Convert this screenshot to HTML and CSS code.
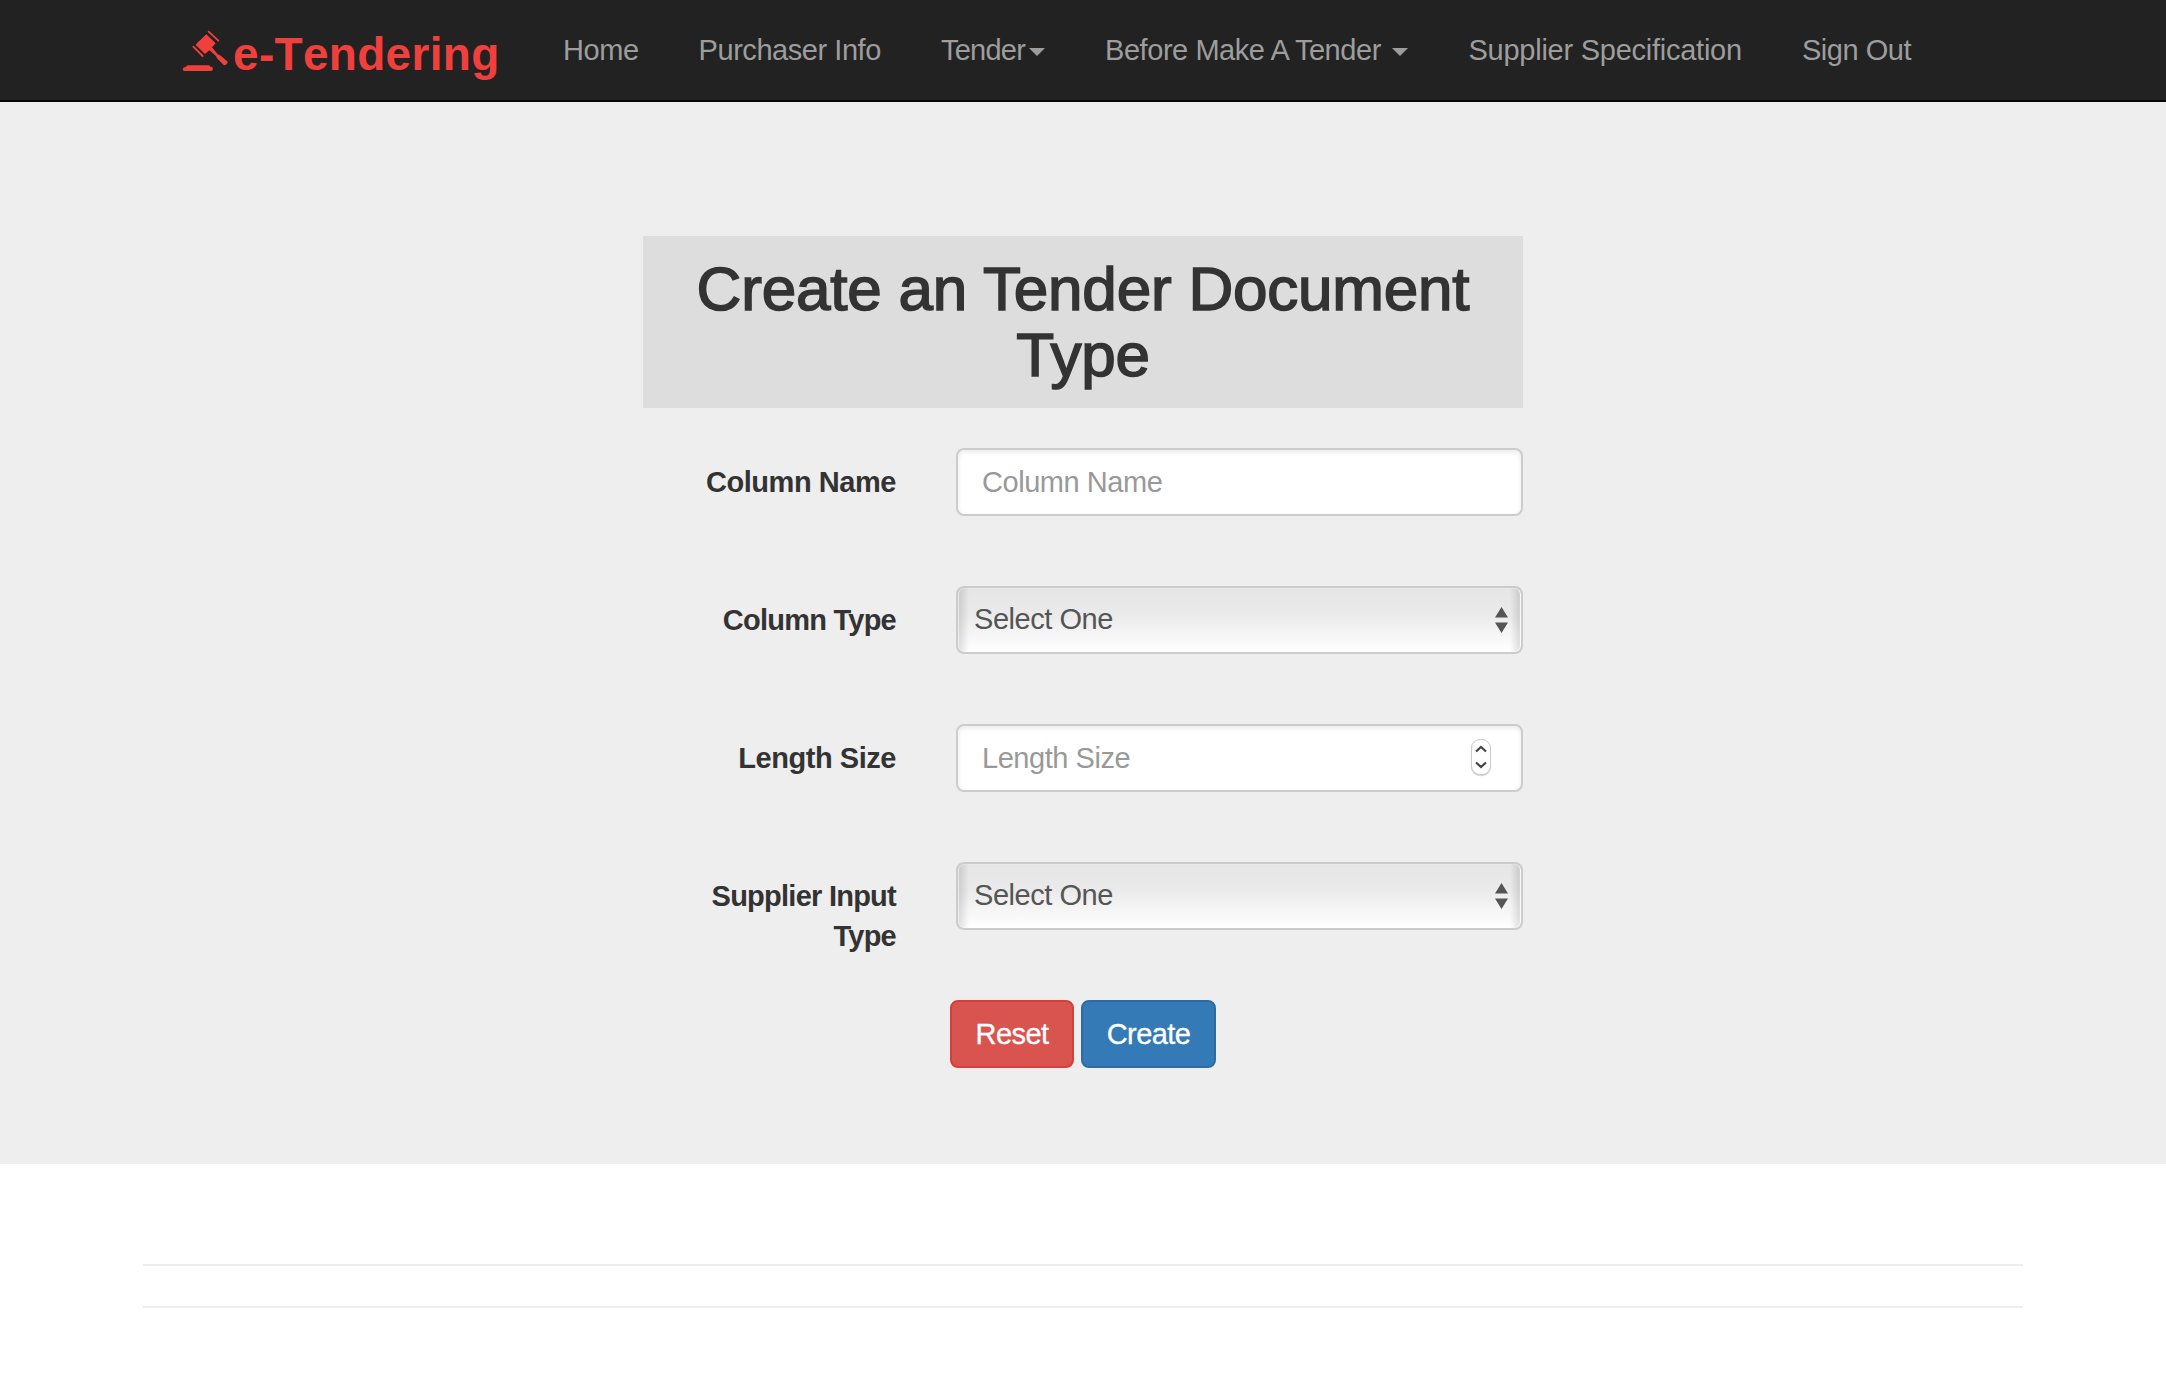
FILE: index.html
```html
<!DOCTYPE html>
<html lang="en">
<head>
<meta charset="utf-8">
<title>e-Tendering</title>
<link rel="stylesheet" href="styles.css">
</head>
<body>
<nav class="navbar">
  <a class="brand">
    <svg class="brand-icon" viewBox="66 90 138 126" fill="#ef403d">
      <path d="M83 196h63q4 0 5 4h3q5 1 5 6-1 7-6 7H74q-6 0-6-6 1-5 7-6h3q1-5 5-5z"/>
      <path d="M139 103l28 27-11 12 17 21q6 1 11 6l19 16-1 5-5 5-5 1-19-19q-4-5-5-9l-20-17-13 11-28-27q5-7 10-11z"/>
      <path d="M146 95l29 27M100 140l28 28" stroke="#ef403d" stroke-width="5.500" stroke-linecap="round"/>
    </svg>
    <span class="brand-text">e-Tendering</span>
  </a>
  <ul class="menu">
    <li>Home</li>
    <li>Purchaser Info</li>
    <li class="tight">Tender<i class="caret"></i></li>
    <li>Before Make A Tender <i class="caret"></i></li>
    <li class="wide">Supplier Specification</li>
    <li>Sign Out</li>
  </ul>
</nav>
<main class="jumbotron">
  <form class="tender-form">
    <h2 class="title">Create an Tender Document Type</h2>
    <div class="row">
      <label class="label">Column Name</label>
      <div class="field"><input class="control" type="text" placeholder="Column Name"></div>
    </div>
    <div class="row">
      <label class="label tight">Column Type</label>
      <div class="field">
        <select class="control select"><option>Select One</option></select>
        <svg class="arrows" viewBox="0 0 13 26" fill="#555"><path d="M6.500 0L13 10.500H0zM0 15.500h13L6.500 26z"/></svg>
      </div>
    </div>
    <div class="row">
      <label class="label">Length Size</label>
      <div class="field">
        <input class="control" type="text" placeholder="Length Size">
        <span class="spinner">
          <svg viewBox="0 0 12 24" fill="none" stroke="#444" stroke-width="2.200"><path d="M1 6.500l5-4.500 5 4.500M1 17.500l5 4.500 5-4.500"/></svg>
        </span>
      </div>
    </div>
    <div class="row">
      <label class="label tight">Supplier Input Type</label>
      <div class="field">
        <select class="control select"><option>Select One</option></select>
        <svg class="arrows" viewBox="0 0 13 26" fill="#555"><path d="M6.500 0L13 10.500H0zM0 15.500h13L6.500 26z"/></svg>
      </div>
    </div>
    <div class="actions">
      <button class="btn btn-danger" type="button">Reset</button>
      <button class="btn btn-primary" type="button">Create</button>
    </div>
  </form>
</main>
<footer class="footer">
  <hr class="rule">
  <hr class="rule">
</footer>
</body>
</html>
```
FILE: styles.css
```css
* { box-sizing: border-box; }
body {
  margin: 0;
  background: #fff;
  color: #333;
  font: 29px/40px "Liberation Sans", Arial, sans-serif;
  letter-spacing: -0.45px;
}
.navbar {
  display: flex;
  height: 102px;
  padding-left: 182px;
  background: #222;
  border-bottom: 2px solid #080808;
}
.brand {
  display: flex;
  width: 381px;
  padding-top: 30px;
  color: #ef403d;
}
.brand-icon { width: 46px; height: 42px; }
.brand-text {
  margin: -1px 0 0 5px;
  font-size: 46px;
  font-weight: 700;
  font-kerning: none;
  line-height: 50px;
  letter-spacing: .3px;
}
.menu {
  display: flex;
  gap: 60px;
  margin: 0;
  padding: 30px 0 0;
  list-style: none;
  color: #9d9d9d;
  white-space: pre;
}
.tight { letter-spacing: -0.75px; }
.wide { letter-spacing: -0.25px; }
.caret {
  display: inline-block;
  margin-left: 4px;
  vertical-align: middle;
  border-top: 8px solid;
  border-left: 8px solid transparent;
  border-right: 8px solid transparent;
}
.jumbotron {
  height: 1062px;
  padding-top: 134px;
  background: #eee;
}
.tender-form { width: 880px; margin: 0 auto; }
.title {
  height: 172px;
  margin: 0 0 40px;
  padding: 20px 40px;
  background: #ddd;
  font-size: 62px;
  font-weight: 400;
  line-height: 66px;
  letter-spacing: -0.2px;
  text-align: center;
  -webkit-text-stroke: 1.6px #333;
}
.row {
  display: grid;
  grid-template-columns: 253px 567px;
  column-gap: 60px;
  height: 138px;
}
.label {
  padding: 14px 0 0 40px;
  font-weight: 700;
  text-align: right;
}
.field { position: relative; height: 68px; }
.control {
  display: block;
  width: 100%;
  height: 68px;
  padding: 12px 24px;
  border: 2px solid #ccc;
  border-radius: 8px;
  background: #fff;
  box-shadow: inset 0 2px 5px rgba(0, 0, 0, .09);
  color: #555;
  font: inherit;
  letter-spacing: inherit;
  outline: 0;
}
.control::placeholder { color: #999; opacity: 1; }
.select {
  appearance: none;
  padding: 11px 16px 13px;
  background:
    linear-gradient(90deg, #0002, #0000) left / 11px 100% no-repeat,
    linear-gradient(270deg, #0002, #0000) right / 11px 100% no-repeat,
    linear-gradient(#e6e6e6, #eaeaea 40%, #fff);
  box-shadow: inset -1px 0 1px #fff, inset 1px 0 1px #fff9;
}
.arrows {
  position: absolute;
  right: 15px;
  top: 21px;
  width: 13px;
  height: 26px;
}
.spinner {
  position: absolute;
  right: 32px;
  top: 15px;
  display: grid;
  place-items: center;
  width: 20px;
  height: 36px;
  border: 1px solid #ccc;
  border-radius: 9px;
  background: #fff;
  box-shadow: 0 1px 1px #0003;
}
.spinner svg { width: 12px; height: 24px; }
.actions {
  display: flex;
  gap: 7px;
  padding-left: 307px;
}
.btn {
  height: 68px;
  padding: 0;
  border: 2px solid;
  border-radius: 8px;
  color: #fff;
  font: inherit;
  letter-spacing: -0.6px;
  -webkit-text-stroke: .3px #fff;
}
.btn-danger { width: 124px; background: #d9534f; border-color: #d43f3a; }
.btn-primary { width: 135px; background: #337ab7; border-color: #2e6da4; }
.footer { width: 1880px; margin: 100px auto 0; }
.rule {
  height: 2px;
  margin: 0 0 40px;
  border: 0;
  background: #eee;
}
```
